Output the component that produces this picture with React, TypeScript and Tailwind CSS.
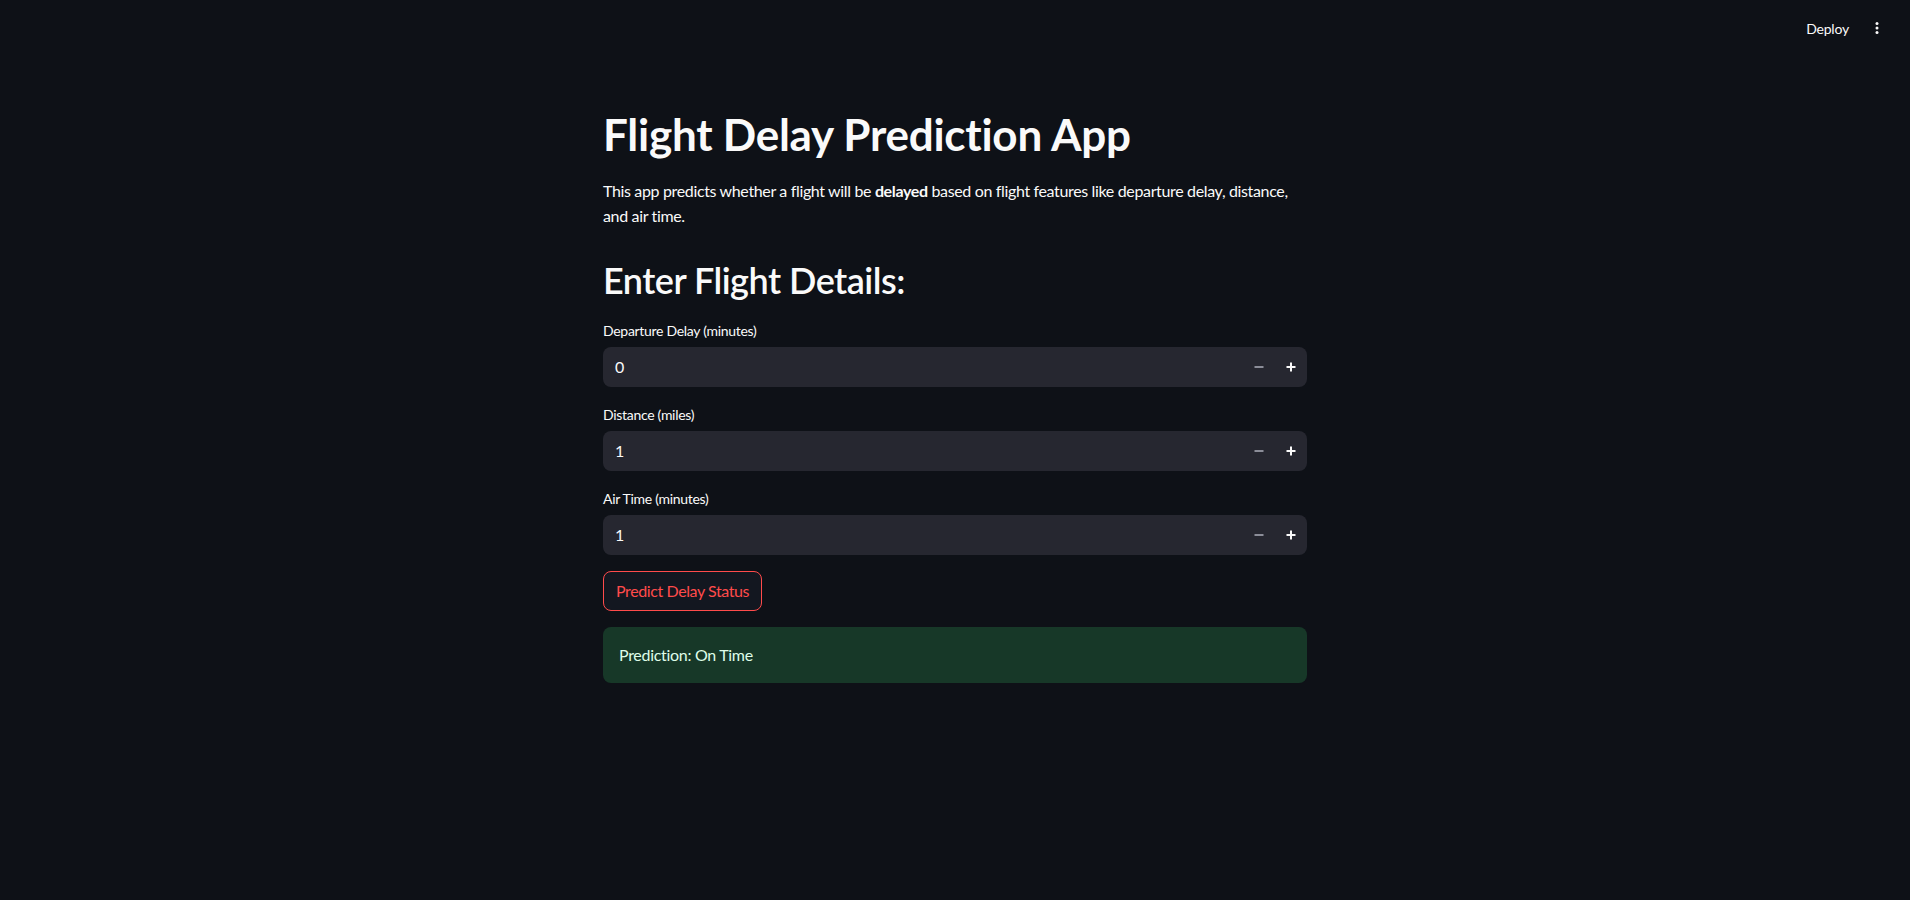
import React from "react";

const FONT = { fontFamily: "Lato, 'Noto Sans', sans-serif" };

function StepInput({ label, value }: { label: string; value: string }) {
  return (
    <div className="flex flex-col">
      <div className="h-[24px] mb-[4px] flex items-center text-[14px] leading-[24px] tracking-[-0.3px] text-[#fafafa]">
        {label}
      </div>
      <div className="h-[40px] rounded-lg bg-[#262730] flex items-center">
        <div className="flex-1 pl-[12px] text-[16px] text-[#fafafa]">{value}</div>
        <button className="w-[32px] h-[40px] flex items-center justify-center">
          <svg width="10" height="10" viewBox="0 0 10 10">
            <rect x="0.5" y="4" width="9" height="2" fill="#8b8d98" />
          </svg>
        </button>
        <button className="w-[32px] h-[40px] flex items-center justify-center">
          <svg width="10" height="10" viewBox="0 0 10 10">
            <rect x="0.5" y="4" width="9" height="2" fill="#fafafa" />
            <rect x="4" y="0.5" width="2" height="9" fill="#fafafa" />
          </svg>
        </button>
      </div>
    </div>
  );
}

export default function App() {
  return (
    <div className="min-h-screen bg-[#0e1117] text-[#fafafa]" style={FONT}>
      <header className="h-[56px] flex items-center justify-end pr-[17px]">
        <button className="px-[12px] h-[32px] text-[14px] tracking-[-0.2px] text-[#fafafa]">Deploy</button>
        <button className="w-[32px] h-[32px] flex items-center justify-center">
          <svg width="18" height="18" viewBox="0 0 24 24" fill="#fafafa">
            <circle cx="12" cy="6" r="2" />
            <circle cx="12" cy="12" r="2" />
            <circle cx="12" cy="18" r="2" />
          </svg>
        </button>
      </header>
      <main className="mx-auto w-[704px] pt-[52px] pb-[100px]">
        <h1 className="text-[44px] leading-[52.8px] font-bold tracking-[-0.25px] text-[#fafafa]">
          Flight Delay Prediction App
        </h1>
        <p className="mt-[17px] text-[16px] leading-[25.6px] tracking-[-0.35px] text-[#fafafa]">
          This app predicts whether a flight will be <strong className="font-bold">delayed</strong> based on flight
          features like departure delay, distance, and air time.
        </p>
        <h2 className="mt-[30px] text-[36px] leading-[43.2px] font-semibold tracking-[-0.5px] text-[#fafafa]">
          Enter Flight Details:
        </h2>
        <div className="mt-[17px] flex flex-col gap-[16px]">
          <StepInput label="Departure Delay (minutes)" value="0" />
          <StepInput label="Distance (miles)" value="1" />
          <StepInput label="Air Time (minutes)" value="1" />
          <div>
            <button className="h-[40px] px-[12px] rounded-lg border border-[#ff4b4b] bg-[#131720] text-[16px] tracking-[-0.4px] text-[#ff4b4b]">
              Predict Delay Status
            </button>
          </div>
          <div className="h-[56px] rounded-lg bg-[#173828] px-[16px] flex items-center text-[16px] tracking-[-0.3px] text-[#dffde9]">
            Prediction: On Time
          </div>
        </div>
      </main>
    </div>
  );
}
